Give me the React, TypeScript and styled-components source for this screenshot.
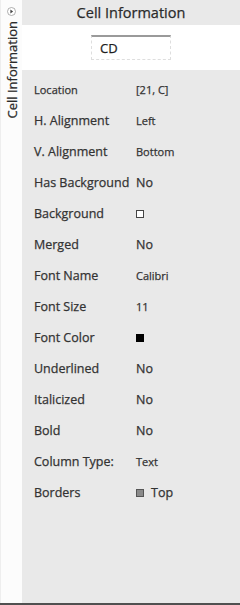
import styled, { createGlobalStyle } from 'styled-components'

const GlobalStyle = createGlobalStyle`
  html, body {
    margin: 0;
    padding: 0;
    background: #ffffff;
  }
  body {
    font-family: "Open Sans", "Noto Sans", sans-serif;
    color: #2b2b2b;
    -webkit-text-stroke: 0.25px currentColor;
  }
`

const Frame = styled.div`
  display: flex;
  flex-direction: column;
  width: 240px;
  height: 605px;
`

const Main = styled.div`
  flex: 1;
  display: flex;
  min-height: 0;
`

const BottomBar = styled.div`
  height: 2px;
  background: #505050;
`

const SideStrip = styled.div`
  width: 22px;
  flex: none;
  display: flex;
  flex-direction: column;
  align-items: center;
  padding-top: 7px;
  gap: 5px;
  background: #fcfcfc;
  border-left: 1px solid #eeeeee;
  box-sizing: border-box;
`

const SideTitle = styled.div`
  writing-mode: vertical-rl;
  transform: rotate(180deg);
  font-size: 13px;
  line-height: 14px;
  color: #2b2b2b;
  white-space: nowrap;
`

const Panel = styled.div`
  flex: 1;
  display: flex;
  flex-direction: column;
  background: #e9e9e9;
`

const Header = styled.div`
  height: 25px;
  display: flex;
  align-items: center;
  justify-content: center;
  font-size: 14.5px;
  color: #2b2b2b;
`

const InputBand = styled.div`
  height: 45px;
  background: #ffffff;
  display: flex;
  justify-content: center;
  align-items: center;
`

const CellInput = styled.div`
  width: 80px;
  height: 25px;
  box-sizing: border-box;
  border: 1px dashed #dedede;
  border-top: 2px solid #9a9a9a;
  display: flex;
  align-items: center;
  padding-left: 8px;
  font-size: 13px;
  color: #1e1e1e;
`

const Rows = styled.div`
  display: flex;
  flex-direction: column;
  padding: 4px 0 0 12px;
`

const Row = styled.div`
  display: grid;
  grid-template-columns: 102px 1fr;
  align-items: center;
  height: 31px;
`

const Label = styled.span<{ $small?: boolean }>`
  font-size: ${p => (p.$small ? '11px' : '12.5px')};
  color: #333333;
  white-space: nowrap;
`

const Value = styled.span<{ $small?: boolean }>`
  display: flex;
  align-items: center;
  gap: 7px;
  font-size: ${p => (p.$small ? '11px' : '12.5px')};
  color: #333333;
  white-space: nowrap;
`

const Swatch = styled.span<{ $fill: string; $edge: string }>`
  display: inline-block;
  width: 8px;
  height: 8px;
  box-sizing: border-box;
  background: ${p => p.$fill};
  border: 1px solid ${p => p.$edge};
`

function ExpandIcon() {
  return (
    <svg width="9" height="9" viewBox="0 0 9 9">
      <circle cx="4.5" cy="4.5" r="4" fill="#ffffff" stroke="#9a9a9a" strokeWidth="0.8" />
      <path d="M3.4 2.6 L6.1 4.5 L3.4 6.4 Z" fill="#444444" />
    </svg>
  )
}

type Item = {
  label: string
  value?: string
  smallLabel?: boolean
  smallValue?: boolean
  swatch?: { fill: string; edge: string }
}

const items: Item[] = [
  { label: 'Location', value: '[21, C]', smallLabel: true, smallValue: true },
  { label: 'H. Alignment', value: 'Left', smallValue: true },
  { label: 'V. Alignment', value: 'Bottom', smallValue: true },
  { label: 'Has Background', value: 'No' },
  { label: 'Background', swatch: { fill: '#ffffff', edge: '#444444' } },
  { label: 'Merged', value: 'No' },
  { label: 'Font Name', value: 'Calibri', smallValue: true },
  { label: 'Font Size', value: '11', smallValue: true },
  { label: 'Font Color', swatch: { fill: '#000000', edge: '#000000' } },
  { label: 'Underlined', value: 'No' },
  { label: 'Italicized', value: 'No' },
  { label: 'Bold', value: 'No' },
  { label: 'Column Type:', value: 'Text', smallValue: true },
  { label: 'Borders', value: 'Top', swatch: { fill: '#8a8a8a', edge: '#555555' } }
]

export default function App() {
  return (
    <>
      <GlobalStyle />
      <Frame>
        <Main>
          <SideStrip>
            <ExpandIcon />
            <SideTitle>Cell Information</SideTitle>
          </SideStrip>
          <Panel>
            <Header>Cell Information</Header>
            <InputBand>
              <CellInput>CD</CellInput>
            </InputBand>
            <Rows>
              {items.map(item => (
                <Row key={item.label}>
                  <Label $small={item.smallLabel}>{item.label}</Label>
                  <Value $small={item.smallValue}>
                    {item.swatch && <Swatch $fill={item.swatch.fill} $edge={item.swatch.edge} />}
                    {item.value}
                  </Value>
                </Row>
              ))}
            </Rows>
          </Panel>
        </Main>
        <BottomBar />
      </Frame>
    </>
  )
}
